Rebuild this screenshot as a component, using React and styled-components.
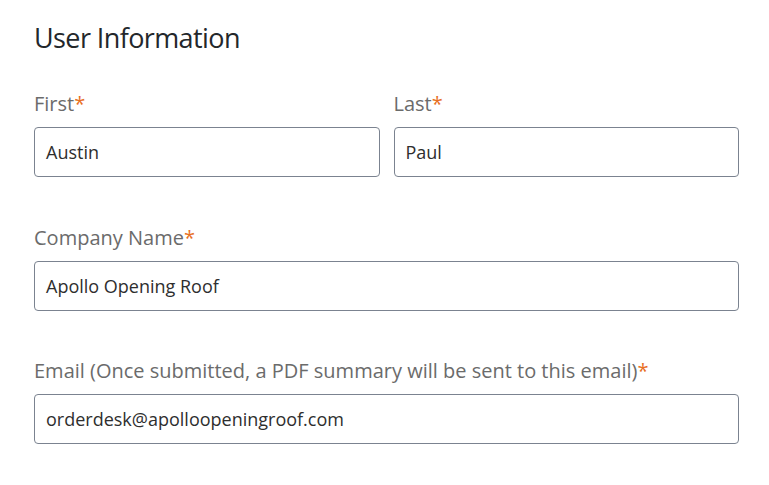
import React from "react";
import styled, { createGlobalStyle } from "styled-components";

const Global = createGlobalStyle`
  html, body { margin: 0; padding: 0; background: #fff; }
  body { font-family: "Open Sans", "Noto Sans", sans-serif; }
`;

const Page = styled.div`
  width: 705px;
  padding: 20px 30px 0 34px;
  display: flex;
  flex-direction: column;
`;

const Title = styled.h2`
  margin: 0 0 34px;
  font-size: 27px;
  line-height: 36px;
  letter-spacing: -0.6px;
  font-weight: 400;
  color: #23272b;
`;

const Row = styled.div`
  display: grid;
  grid-template-columns: ${(p) => (p.$cols === 2 ? "1fr 1fr" : "1fr")};
  column-gap: 14px;
  margin-bottom: ${(p) => p.$gap}px;
`;

const Field = styled.div`
  display: flex;
  flex-direction: column;
`;

const Label = styled.label`
  font-size: 20px;
  line-height: 28px;
  color: #6b6b6b;
  margin-bottom: 9px;
`;

const Star = styled.span`
  color: #e8701f;
`;

const Input = styled.div`
  box-sizing: border-box;
  height: 50px;
  border: 1px solid #7b8390;
  border-radius: 4px;
  padding: 0 11px;
  display: flex;
  align-items: center;
  font-size: 18px;
  color: #2e2e2e;
`;

const FormField = ({ label, value }) => (
  <Field>
    <Label>
      {label}
      <Star>*</Star>
    </Label>
    <Input>{value}</Input>
  </Field>
);

export default function App() {
  return (
    <>
      <Global />
      <Page>
        <Title>User Information</Title>
        <Row $cols={2} $gap={47}>
          <FormField label="First" value="Austin" />
          <FormField label="Last" value="Paul" />
        </Row>
        <Row $gap={46}>
          <FormField label="Company Name" value="Apollo Opening Roof" />
        </Row>
        <Row $gap={0}>
          <FormField
            label="Email (Once submitted, a PDF summary will be sent to this email)"
            value="orderdesk@apolloopeningroof.com"
          />
        </Row>
      </Page>
    </>
  );
}
